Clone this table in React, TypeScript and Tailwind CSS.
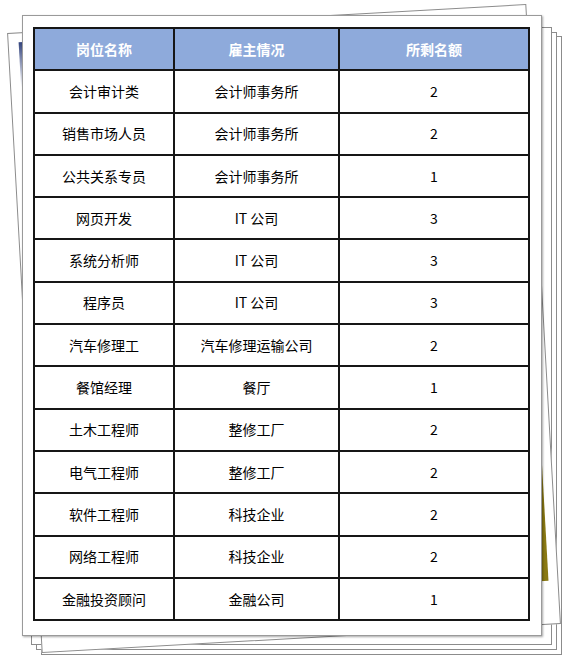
import React from 'react';

interface JobRow {
  title: string;
  employer: string;
  slots: number;
}

const rows: JobRow[] = [
  { title: '会计审计类', employer: '会计师事务所', slots: 2 },
  { title: '销售市场人员', employer: '会计师事务所', slots: 2 },
  { title: '公共关系专员', employer: '会计师事务所', slots: 1 },
  { title: '网页开发', employer: 'IT 公司', slots: 3 },
  { title: '系统分析师', employer: 'IT 公司', slots: 3 },
  { title: '程序员', employer: 'IT 公司', slots: 3 },
  { title: '汽车修理工', employer: '汽车修理运输公司', slots: 2 },
  { title: '餐馆经理', employer: '餐厅', slots: 1 },
  { title: '土木工程师', employer: '整修工厂', slots: 2 },
  { title: '电气工程师', employer: '整修工厂', slots: 2 },
  { title: '软件工程师', employer: '科技企业', slots: 2 },
  { title: '网络工程师', employer: '科技企业', slots: 2 },
  { title: '金融投资顾问', employer: '金融公司', slots: 1 },
];

const cell = 'border-2 border-[#161616]';

const App: React.FC = () => {
  return (
    <div
      className="relative flex items-start w-[573px] h-[662px] pl-[22px] pt-[15px] bg-white overflow-hidden"
      style={{ fontFamily: '"Noto Sans CJK SC", "Noto Sans", sans-serif' }}
    >
      {/* stacked sheets peeking out behind */}
      <div className="absolute left-[41px] top-[36px] w-[521px] h-[619px] bg-white border border-[#8c8c8c]"></div>
      <div className="absolute left-[36px] top-[32px] w-[521px] h-[618px] bg-white border border-[#8c8c8c]"></div>
      <div className="absolute left-[31px] top-[27px] w-[521px] h-[618px] bg-white border border-[#8c8c8c]"></div>

      {/* tilted sheet */}
      <div className="absolute left-[24px] top-[18px] w-[520px] h-[621px] bg-white border border-[#8c8c8c] -rotate-[3.2deg]">
        <div className="absolute left-[10px] top-[9px] w-[40px] h-[45px] bg-linear-to-b from-[#34457e] to-white/0"></div>
        <div className="absolute left-[460px] top-[420px] w-[49px] h-[156px] bg-[#8a7914]"></div>
      </div>

      {/* main sheet */}
      <div className="relative w-[520px] h-[621px] bg-white border border-[#9a9a9a] shadow-[1px_1px_2px_rgba(0,0,0,0.35)] pl-[10px] pt-[11px]">
        <table className="table-fixed w-[495px] border-collapse text-[14px] text-black">
          <colgroup>
            <col className="w-[140px]" />
            <col className="w-[165px]" />
            <col className="w-[190px]" />
          </colgroup>
          <thead>
            <tr className="h-[42.3px] bg-[#8eaadb] text-white font-bold">
              <th className={cell}>岗位名称</th>
              <th className={cell}>雇主情况</th>
              <th className={cell}>所剩名额</th>
            </tr>
          </thead>
          <tbody>
            {rows.map((row, index) => (
              <tr key={index} className="h-[42.3px] text-center">
                <td className={cell}>{row.title}</td>
                <td className={cell}>{row.employer}</td>
                <td className={cell}>{row.slots}</td>
              </tr>
            ))}
          </tbody>
        </table>
      </div>
    </div>
  );
};

export default App;
